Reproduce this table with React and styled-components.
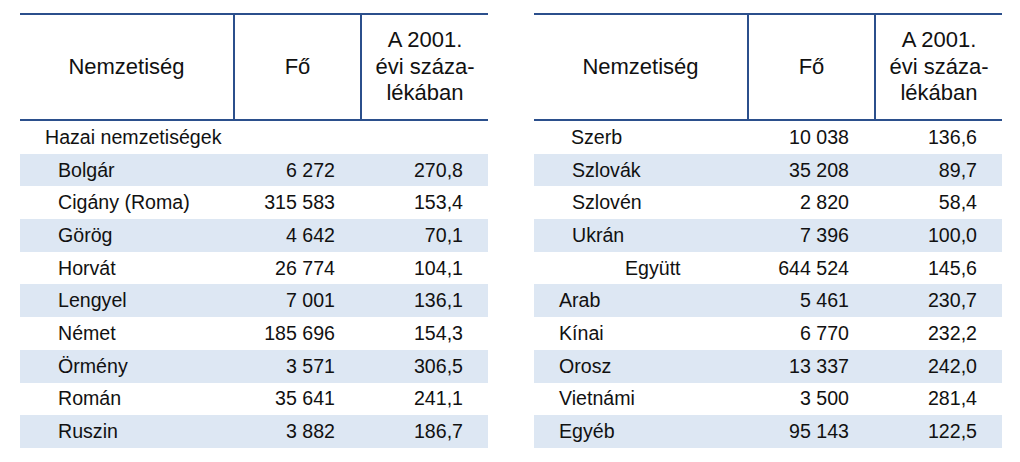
import React from 'react';
import styled, { createGlobalStyle } from 'styled-components';

const GlobalStyle = createGlobalStyle`
  body {
    margin: 0;
    background: #fff;
    font-family: "Liberation Sans", Arial, sans-serif;
    color: #111;
  }
`;

const Page = styled.div`
  display: flex;
  gap: 46px;
  padding: 13px 0 0 20px;
`;

const Table = styled.div`
  display: grid;
  grid-template-columns: 213px 127px 128px;
  grid-template-rows: 108px;
  grid-auto-rows: 32.7px;
`;

const HeadCell = styled.div`
  box-sizing: border-box;
  border-top: 2px solid #2b4f8c;
  border-bottom: 2px solid #2b4f8c;
  border-left: ${(p) => (p.first ? 'none' : '2px solid #2b4f8c')};
  display: flex;
  align-items: center;
  justify-content: center;
  text-align: center;
  font-size: 22px;
  line-height: 26.5px;
  color: #111;
`;

const Cell = styled.div`
  display: flex;
  align-items: center;
  justify-content: ${(p) => (p.num ? 'flex-end' : 'flex-start')};
  padding: ${(p) => (p.num ? '0 25px 0 0' : `0 0 0 ${p.indent}px`)};
  background: ${(p) => (p.striped ? '#dde7f3' : 'transparent')};
  font-size: 19.6px;
  white-space: nowrap;
`;

const left = [
  ['Hazai nemzetiségek', '', '', 25],
  ['Bolgár', '6 272', '270,8', 38],
  ['Cigány (Roma)', '315 583', '153,4', 38],
  ['Görög', '4 642', '70,1', 38],
  ['Horvát', '26 774', '104,1', 38],
  ['Lengyel', '7 001', '136,1', 38],
  ['Német', '185 696', '154,3', 38],
  ['Örmény', '3 571', '306,5', 38],
  ['Román', '35 641', '241,1', 38],
  ['Ruszin', '3 882', '186,7', 38],
];

const right = [
  ['Szerb', '10 038', '136,6', 37],
  ['Szlovák', '35 208', '89,7', 38],
  ['Szlovén', '2 820', '58,4', 38],
  ['Ukrán', '7 396', '100,0', 38],
  ['Együtt', '644 524', '145,6', 91],
  ['Arab', '5 461', '230,7', 25],
  ['Kínai', '6 770', '232,2', 25],
  ['Orosz', '13 337', '242,0', 25],
  ['Vietnámi', '3 500', '281,4', 25],
  ['Egyéb', '95 143', '122,5', 25],
];

const NationTable = ({ rows }) => (
  <Table>
    <HeadCell first>Nemzetiség</HeadCell>
    <HeadCell>Fő</HeadCell>
    <HeadCell>
      A 2001.
      <br />
      évi száza-
      <br />
      lékában
    </HeadCell>
    {rows.map(([name, count, pct, indent], i) => {
      const striped = i % 2 === 1;
      return (
        <React.Fragment key={name}>
          <Cell striped={striped} indent={indent}>{name}</Cell>
          <Cell striped={striped} num>{count}</Cell>
          <Cell striped={striped} num>{pct}</Cell>
        </React.Fragment>
      );
    })}
  </Table>
);

export default function App() {
  return (
    <>
      <GlobalStyle />
      <Page>
        <NationTable rows={left} />
        <NationTable rows={right} />
      </Page>
    </>
  );
}
